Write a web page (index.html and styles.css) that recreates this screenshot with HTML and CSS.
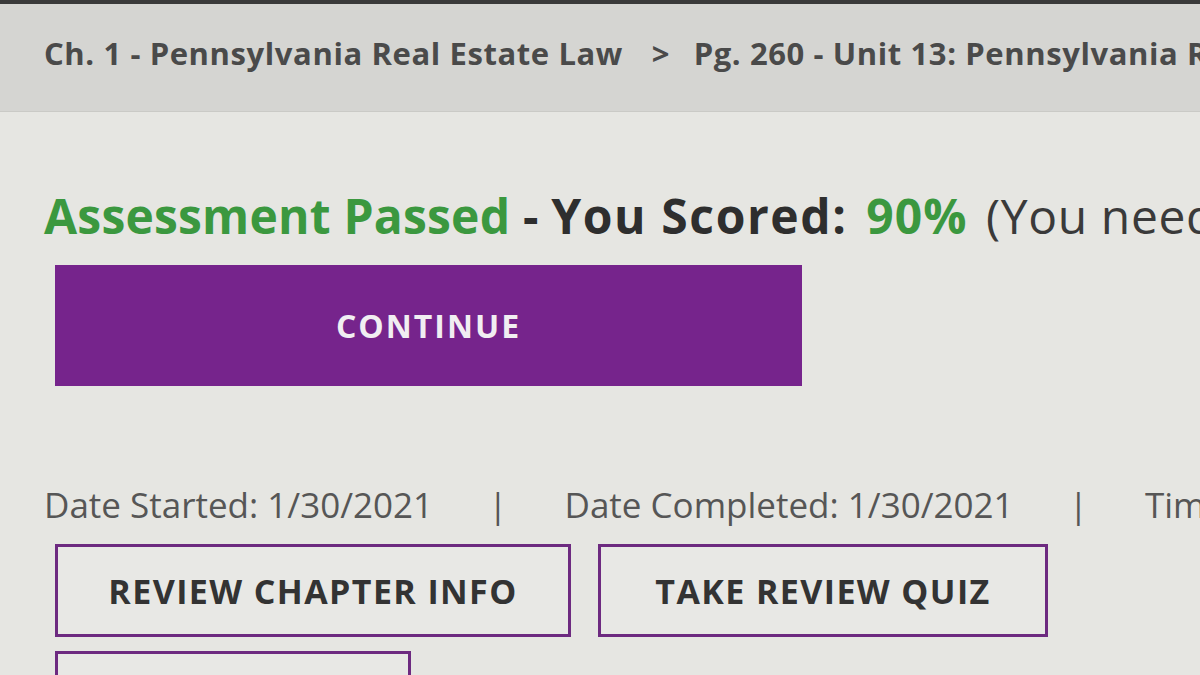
FILE: index.html
```html
<!DOCTYPE html>
<html lang="en">
<head>
    <meta charset="UTF-8">
    <meta name="viewport" content="width=device-width, initial-scale=1.0">
    <title>Assessment Results</title>
    <link rel="stylesheet" href="styles.css">
</head>
<body>
    <div class="bezel"></div>

    <header class="crumbs">
        <span class="crumb">Ch. 1 - Pennsylvania Real Estate Law</span>
        <span class="crumb-sep">&gt;</span>
        <span class="crumb">Pg. 260 - Unit 13: Pennsylvania Real Estate Licensing and Registration Act</span>
    </header>

    <main class="result">
        <h1 class="score-line">
            <span class="passed">Assessment Passed</span>
            <span class="dash">-</span>
            <span class="scored">You Scored:</span>
            <span class="passed percent">90%</span>
            <span class="needed">(You need 70% to pass)</span>
        </h1>

        <button class="btn-continue">CONTINUE</button>

        <div class="dates">
            <span>Date Started: 1/30/2021</span>
            <span class="pipe">|</span>
            <span>Date Completed: 1/30/2021</span>
            <span class="pipe">|</span>
            <span>Time Spent: 00:14:32</span>
        </div>

        <div class="actions">
            <button class="btn-outline wide">REVIEW CHAPTER INFO</button>
            <button class="btn-outline">TAKE REVIEW QUIZ</button>
            <button class="btn-outline short">PRINT RESULTS</button>
        </div>
    </main>
</body>
</html>
```

FILE: styles.css
```css
html, body {
    margin: 0;
    padding: 0;
    height: 100%;
    overflow: hidden;
}
body {
    font-family: "Open Sans", Lato, sans-serif;
    background-color: #e6e6e2;
    color: #2f2f2f;
}
.bezel {
    height: 4px;
    background-color: #3a3a3a;
}
.crumbs {
    height: 108px;
    box-sizing: border-box;
    padding: 28px 0 0 44px;
    background-color: #d5d5d2;
    border-bottom: 1px solid #cacac6;
    white-space: nowrap;
    overflow: hidden;
    font-size: 31px;
    font-weight: 700;
    letter-spacing: 0.6px;
    color: #4a4a4a;
}
.crumb-sep {
    margin: 0 15px 0 20px;
}
.result {
    padding: 76px 0 0 44px;
}
.score-line {
    margin: 0;
    font-size: 48px;
    line-height: 56px;
    font-weight: 700;
    letter-spacing: 0.2px;
    color: #2e2e2e;
    white-space: nowrap;
}
.passed {
    color: #3b983f;
}
.scored {
    letter-spacing: 1.6px;
    margin-right: 6px;
}
.percent {
    letter-spacing: 1px;
    margin-right: 6px;
}
.needed {
    font-weight: 400;
    letter-spacing: 0.6px;
    color: #3a3a3a;
}
.btn-continue {
    display: block;
    margin: 21px 0 0 11px;
    width: 747px;
    height: 121px;
    border: none;
    background-color: #76248c;
    color: #f1eef2;
    font-family: inherit;
    font-size: 32px;
    font-weight: 700;
    letter-spacing: 2px;
}
.dates {
    margin-top: 96px;
    font-size: 35px;
    line-height: 46px;
    color: #565656;
    white-space: nowrap;
}
.pipe {
    margin: 0 48px 0 46px;
}
.actions {
    margin: 16px 0 0 11px;
    display: flex;
    flex-wrap: wrap;
    gap: 14px 27px;
    width: 1100px;
}
.btn-outline {
    width: 450px;
    height: 93px;
    box-sizing: border-box;
    border: 3px solid #6d2a80;
    background-color: #e8e8e5;
    color: #333;
    font-family: inherit;
    font-size: 34px;
    font-weight: 700;
    letter-spacing: 1.4px;
}
.btn-outline.wide {
    width: 516px;
}
.btn-outline.short {
    width: 356px;
}
```
